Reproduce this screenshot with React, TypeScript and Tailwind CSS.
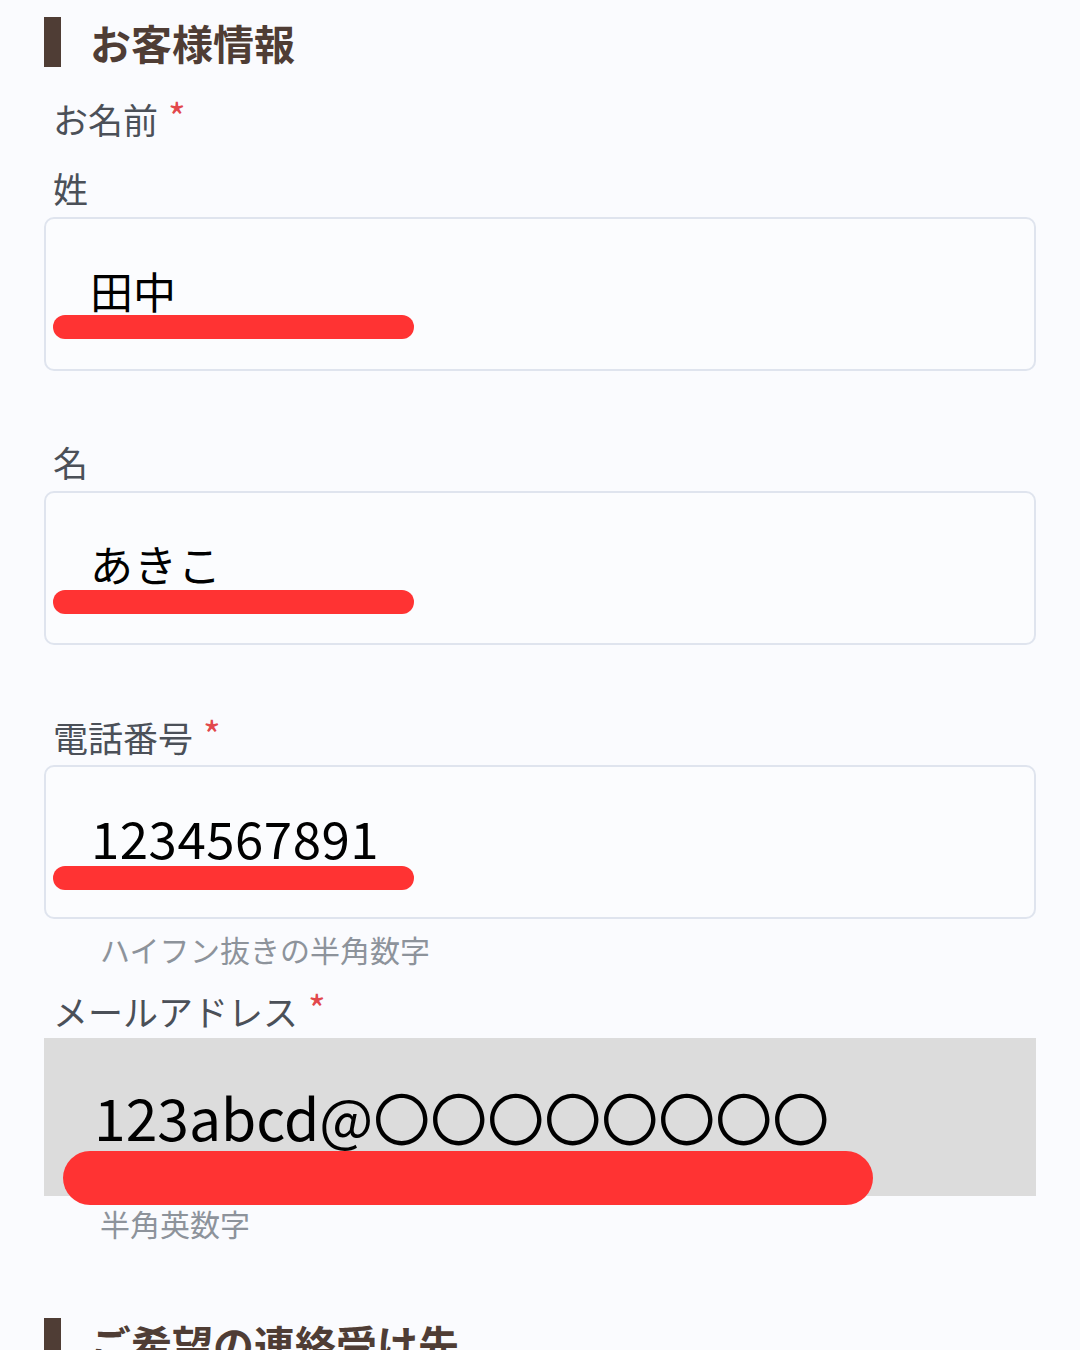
const font = { fontFamily: '"Noto Sans CJK JP", "Noto Sans", sans-serif' };

function SectionHeading({ title, className = "" }: { title: string; className?: string }) {
  return (
    <div className={`flex items-center h-[50px] ${className}`}>
      <div className="w-[17px] h-[50px] bg-[#4f3d35]" />
      <h2 className="ml-[29px] text-[41px] leading-[50px] font-bold text-[#4f3d35] whitespace-nowrap">
        {title}
      </h2>
    </div>
  );
}

function Label({ text, required = false, className = "" }: { text: string; required?: boolean; className?: string }) {
  return (
    <div className={`flex items-start h-[48px] pl-[9px] ${className}`}>
      <span className="text-[35px] leading-[48px] text-[#4b5058]">{text}</span>
      {required && <span className="ml-[10px] mt-[2px] text-[38px] leading-[38px] text-[#e2484c]">*</span>}
    </div>
  );
}

function RedactedInput({
  value,
  textClass,
  textTop,
  barTop,
  className = "",
}: {
  value: string;
  textClass: string;
  textTop: string;
  barTop: string;
  className?: string;
}) {
  return (
    <div className={`relative h-[154px] rounded-[10px] border-2 border-[#dfe4ee] bg-[#fbfcfe] ${className}`}>
      <div className={`pl-[44px] text-black whitespace-nowrap ${textClass} ${textTop}`}>{value}</div>
      <div className={`absolute left-[7px] w-[361px] h-[24px] rounded-full bg-[#ff3333] ${barTop}`} />
    </div>
  );
}

export default function App() {
  return (
    <div className="h-[1350px] overflow-hidden bg-[#fafbfe] pl-[44px] pr-[44px] pt-[17px]" style={font}>
      <SectionHeading title="お客様情報" />

      <Label text="お名前" required className="mt-[28px]" />
      <Label text="姓" className="mt-[21px]" />
      <RedactedInput
        value="田中"
        textClass="text-[43px] leading-[50px]"
        textTop="pt-[46px]"
        barTop="top-[96px]"
        className="mt-[5px]"
      />

      <Label text="名" className="mt-[67px]" />
      <RedactedInput
        value="あきこ"
        textClass="text-[43px] leading-[50px] tracking-[1px]"
        textTop="pt-[45px]"
        barTop="top-[97px]"
        className="mt-[5px]"
      />

      <Label text="電話番号" required className="mt-[68px]" />
      <RedactedInput
        value="1234567891"
        textClass="text-[51px] leading-[60px] pl-[45px] tracking-[0.5px]"
        textTop="pt-[40px]"
        barTop="top-[99px]"
        className="mt-[4px]"
      />
      <div className="mt-[10px] pl-[56px] h-[40px] text-[30px] leading-[40px] text-[#8d939b]">
        ハイフン抜きの半角数字
      </div>

      <Label text="メールアドレス" required className="mt-[18px]" />
      <div className="relative mt-[3px] h-[158px] bg-[#dcdcdc]">
        <div className="pl-[50px] pt-[40px] text-[57px] leading-[76px] text-black whitespace-nowrap">
          123abcd@〇〇〇〇〇〇〇〇
        </div>
        <div className="absolute z-10 left-[19px] top-[113px] w-[810px] h-[54px] rounded-full bg-[#ff3333]" />
      </div>
      <div className="mt-[7px] pl-[56px] h-[40px] text-[30px] leading-[40px] text-[#8d939b]">
        半角英数字
      </div>

      <SectionHeading title="ご希望の連絡受け先" className="mt-[75px]" />
    </div>
  );
}
